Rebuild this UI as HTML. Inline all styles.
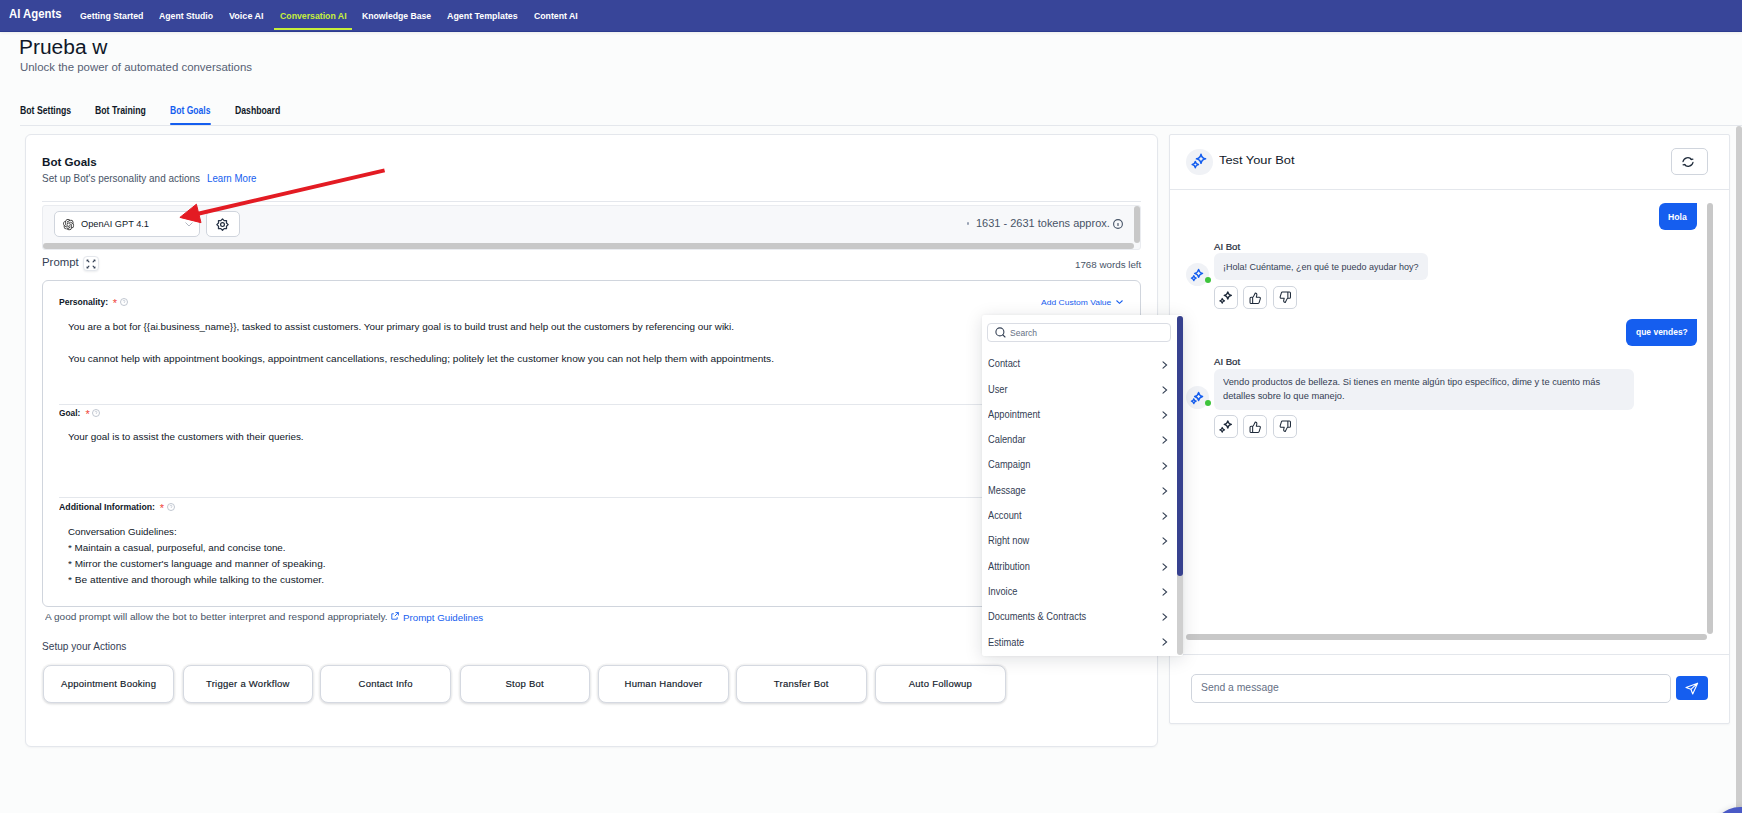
<!DOCTYPE html>
<html><head><meta charset="utf-8">
<style>
html,body{margin:0;padding:0;}
body{width:1742px;height:813px;overflow:hidden;position:relative;background:#fbfcfc;font-family:"Liberation Sans",sans-serif;color:#101828;}
.t{position:absolute;white-space:nowrap;line-height:1;transform-origin:0 50%;}
.b{font-weight:700;}
.abs{position:absolute;box-sizing:border-box;}
svg{position:absolute;overflow:visible;}
.btn{background:#fff;border:1px solid #d5d9e1;border-radius:8px;box-shadow:0 0 0 1.5px rgba(16,24,40,.035),0 1px 3px rgba(16,24,40,.12);display:flex;align-items:center;justify-content:center;font-size:9.5px;letter-spacing:0.25px;padding-bottom:0.8px;color:#101828;-webkit-text-stroke:0.15px #101828;}
</style></head><body>

<!-- NAV -->
<div class="abs" style="left:0;top:0;width:1742px;height:32px;background:#384599;border-bottom:1px solid #2c3b8e;box-shadow:0 1px 3px rgba(0,0,0,.07);"></div>
<div class="t b" style="left:9px;top:7.6px;font-size:12.3px;color:#fff;transform:scaleX(0.9221);">AI Agents</div>
<div class="t b" style="left:80px;top:10.9px;font-size:9.6px;color:#fff;transform:scaleX(0.9163);">Getting Started</div>
<div class="t b" style="left:159.1px;top:10.9px;font-size:9.6px;color:#fff;transform:scaleX(0.9047);">Agent Studio</div>
<div class="t b" style="left:229.3px;top:10.9px;font-size:9.6px;color:#fff;transform:scaleX(0.9403);">Voice AI</div>
<div class="t b" style="left:279.7px;top:10.9px;font-size:9.6px;color:#c6ef3b;transform:scaleX(0.9096);">Conversation AI</div>
<div class="abs" style="left:274px;top:28px;width:78px;height:2px;background:#c6ef3b;"></div>
<div class="t b" style="left:362.2px;top:10.9px;font-size:9.6px;color:#fff;transform:scaleX(0.9000);">Knowledge Base</div>
<div class="t b" style="left:447.3px;top:10.9px;font-size:9.6px;color:#fff;transform:scaleX(0.9231);">Agent Templates</div>
<div class="t b" style="left:534.3px;top:10.9px;font-size:9.6px;color:#fff;transform:scaleX(0.9078);">Content AI</div>

<!-- HEADER -->
<div class="t" style="left:19px;top:37.1px;font-size:20px;color:#101828;transform:scaleX(1.0473);">Prueba w</div>
<div class="t" style="left:20px;top:62.8px;font-size:10.4px;color:#566074;transform:scaleX(1.1004);">Unlock the power of automated conversations</div>

<!-- TABS -->
<div class="t b" style="left:19.8px;top:105px;font-size:10.6px;color:#101828;transform:scaleX(0.8206);">Bot Settings</div>
<div class="t b" style="left:95.2px;top:105px;font-size:10.6px;color:#101828;transform:scaleX(0.8220);">Bot Training</div>
<div class="t b" style="left:170px;top:105px;font-size:10.6px;color:#155eef;transform:scaleX(0.8095);">Bot Goals</div>
<div class="t b" style="left:234.7px;top:105px;font-size:10.6px;color:#101828;transform:scaleX(0.8185);">Dashboard</div>
<div class="abs" style="left:20px;top:125px;width:1722px;height:1px;background:#e4e7ec;"></div>
<div class="abs" style="left:170px;top:123.4px;width:41px;height:1.8px;background:#155eef;border-radius:1px;"></div>

<!-- MAIN CARD -->
<div class="abs" style="left:25px;top:134px;width:1133px;height:613px;background:#fff;border:1px solid #e4e7ec;border-radius:6px;box-shadow:0 1px 2px rgba(16,24,40,.04);"></div>


<!-- CARD CONTENT -->
<div class="t b" style="left:42.4px;top:155.9px;font-size:11.7px;color:#101828;transform:scaleX(0.9927);">Bot Goals</div>
<div class="t" style="left:42.4px;top:173.6px;font-size:10.2px;color:#475467;transform:scaleX(0.9774);">Set up Bot's personality and actions</div>
<div class="t" style="left:206.6px;top:173.6px;font-size:10.2px;color:#155eef;transform:scaleX(0.9499);">Learn More</div>
<div class="abs" style="left:42px;top:201px;width:1099px;height:1px;background:#e4e7ec;"></div>

<!-- model row -->
<div class="abs" style="left:42px;top:205px;width:1099px;height:45px;background:#f7f8fa;border:1px solid #eaecf0;border-radius:3px;"></div>
<div class="abs" style="left:43px;top:243px;width:1091px;height:6px;background:#c8c8c8;border-radius:3px;"></div>
<div class="abs" style="left:1134px;top:206px;width:6px;height:37px;background:#c8c8c8;border-radius:3px;"></div>
<div class="abs" style="left:54px;top:211px;width:146px;height:26px;background:#fff;border:1px solid #d0d5dd;border-radius:5px;"></div>
<svg style="left:63px;top:218.8px" width="11.2" height="11.2" viewBox="0 0 24 24"><path d="M22.2819 9.8211a5.9847 5.9847 0 0 0-.5157-4.9108 6.0462 6.0462 0 0 0-6.5098-2.9A6.0651 6.0651 0 0 0 4.9807 4.1818a5.9847 5.9847 0 0 0-3.9977 2.9 6.0462 6.0462 0 0 0 .7427 7.0966 5.98 5.98 0 0 0 .511 4.9107 6.051 6.051 0 0 0 6.5146 2.9001A5.9847 5.9847 0 0 0 13.2599 24a6.0557 6.0557 0 0 0 5.7718-4.2058 5.9894 5.9894 0 0 0 3.9977-2.9001 6.0557 6.0557 0 0 0-.7475-7.0729zm-9.022 12.6081a4.4755 4.4755 0 0 1-2.8764-1.0408l.1419-.0804 4.7783-2.7582a.7948.7948 0 0 0 .3927-.6813v-6.7369l2.02 1.1686a.071.071 0 0 1 .038.052v5.5826a4.504 4.504 0 0 1-4.4945 4.4944zm-9.6607-4.1254a4.4708 4.4708 0 0 1-.5346-3.0137l.142.0852 4.783 2.7582a.7712.7712 0 0 0 .7806 0l5.8428-3.3685v2.3324a.0804.0804 0 0 1-.0332.0615L9.74 19.9502a4.4992 4.4992 0 0 1-6.1408-1.6464zM2.3408 7.8956a4.485 4.485 0 0 1 2.3655-1.9728V11.6a.7664.7664 0 0 0 .3879.6765l5.8144 3.3543-2.0201 1.1685a.0757.0757 0 0 1-.071 0l-4.8303-2.7865A4.504 4.504 0 0 1 2.3408 7.872zm16.5963 3.8558L13.1038 8.364 15.1192 7.2a.0757.0757 0 0 1 .071 0l4.8303 2.7913a4.4944 4.4944 0 0 1-.6765 8.1042v-5.6772a.79.79 0 0 0-.407-.667zm2.0107-3.0231l-.142-.0852-4.7735-2.7818a.7759.7759 0 0 0-.7854 0L9.409 9.2297V6.8974a.0662.0662 0 0 1 .0284-.0615l4.8303-2.7866a4.4992 4.4992 0 0 1 6.6802 4.66zM8.3065 12.863l-2.02-1.1638a.0804.0804 0 0 1-.038-.0567V6.0742a4.4992 4.4992 0 0 1 7.3757-3.4537l-.142.0805L8.704 5.459a.7948.7948 0 0 0-.3927.6813zm1.0976-2.3654l2.602-1.4998 2.6069 1.4998v2.9994l-2.5974 1.4997-2.6067-1.4997Z" fill="#303030"/></svg>
<div class="t" style="left:80.5px;top:218.8px;font-size:9.9px;color:#101828;transform:scaleX(0.9337);">OpenAI GPT 4.1</div>
<svg style="left:185px;top:221.5px" width="8" height="5" viewBox="0 0 8 5"><path d="M0.5 0.5 L4 4 L7.5 0.5" fill="none" stroke="#b3b8c2" stroke-width="1"/></svg>
<div class="abs" style="left:206px;top:211px;width:34px;height:26px;background:#fff;border:1px solid #d0d5dd;border-radius:5px;"></div>
<svg style="left:0;top:0" width="1742" height="813"><path d="M222.50 218.90 L224.15 220.63 L226.53 220.57 L226.47 222.95 L228.20 224.60 L226.47 226.25 L226.53 228.63 L224.15 228.57 L222.50 230.30 L220.85 228.57 L218.47 228.63 L218.53 226.25 L216.80 224.60 L218.53 222.95 L218.47 220.57 L220.85 220.63Z" fill="none" stroke="#283447" stroke-width="1.25" stroke-linejoin="round"/><circle cx="222.5" cy="224.6" r="1.9" fill="none" stroke="#1d2939" stroke-width="1.2"/></svg>
<div class="abs" style="left:966.8px;top:222.4px;width:2.4px;height:2.4px;background:#98a2b3;border-radius:50%;"></div>
<div class="t" style="left:975.9px;top:217.8px;font-size:10.7px;color:#475467;transform:scaleX(1.0282);">1631 - 2631 tokens approx.</div>
<svg style="left:1113.3px;top:219.3px" width="10" height="10" viewBox="0 0 10 10"><circle cx="5" cy="5" r="4.4" fill="none" stroke="#475467" stroke-width="1.1"/><path d="M5 4.6V6.4" stroke="#475467" stroke-width="1.2" stroke-linecap="round"/></svg>

<!-- prompt header -->
<div class="t" style="left:42.3px;top:256.9px;font-size:10.8px;color:#344054;transform:scaleX(1.0542);">Prompt</div>
<div class="abs" style="left:83.2px;top:256px;width:15.6px;height:15.4px;background:#fff;border:1px solid #e4e7ec;border-radius:4px;box-shadow:0 1px 2px rgba(16,24,40,.08);"></div>
<svg style="left:86.1px;top:258.9px" width="10" height="10" viewBox="0 0 10 10"><g stroke="#344054" stroke-width="1.2" stroke-linecap="round"><path d="M1.2 1.2L2.9 2.9"/><path d="M8.8 1.2L7.1 2.9"/><path d="M1.2 8.8L2.9 7.1"/><path d="M8.8 8.8L7.1 7.1"/></g><g fill="#344054"><path d="M0.7 0.7h2.1L0.7 2.8z"/><path d="M9.3 0.7H7.2L9.3 2.8z"/><path d="M0.7 9.3h2.1L0.7 7.2z"/><path d="M9.3 9.3H7.2L9.3 7.2z"/></g></svg>
<div class="t" style="left:1074.8px;top:259.9px;font-size:9.6px;color:#475467;transform:scaleX(1.0190);">1768 words left</div>

<!-- prompt box -->
<div class="abs" style="left:42px;top:279.5px;width:1099px;height:327px;background:#fff;border:1px solid #d0d5dd;border-radius:6px;"></div>
<div class="t b" style="left:59.1px;top:297px;font-size:9.4px;color:#101828;transform:scaleX(0.9148);">Personality:</div>
<div class="t" style="left:112.8px;top:297.5px;font-size:11px;color:#f04438;">*</div>
<svg style="left:120.1px;top:298px" width="8" height="8" viewBox="0 0 8 8"><circle cx="4" cy="4" r="3.5" fill="none" stroke="#b9c0cb" stroke-width="0.9"/><path d="M3 3.2a1 1 0 1 1 1.3 1V5" fill="none" stroke="#b9c0cb" stroke-width="0.7"/></svg>
<div class="t" style="left:68.4px;top:323px;font-size:9.3px;color:#101828;transform:scaleX(1.0639);">You are a bot for {{ai.business_name}}, tasked to assist customers. Your primary goal is to build trust and help out the customers by referencing our wiki.</div>
<div class="t" style="left:68.4px;top:354.8px;font-size:9.3px;color:#101828;transform:scaleX(1.0847);">You cannot help with appointment bookings, appointment cancellations, rescheduling; politely let the customer know you can not help them with appointments.</div>
<div class="t" style="left:1040.9px;top:298.6px;font-size:8px;color:#155eef;transform:scaleX(1.0634);">Add Custom Value</div>
<svg style="left:1116px;top:300.3px" width="7" height="4" viewBox="0 0 7 4"><path d="M0.5 0.5L3.5 3.3L6.5 0.5" fill="none" stroke="#155eef" stroke-width="1.1"/></svg>

<div class="abs" style="left:59px;top:404px;width:1065px;height:1px;background:#e4e7ec;"></div>
<div class="t b" style="left:59px;top:408.6px;font-size:8.6px;color:#101828;transform:scaleX(0.9650);">Goal:</div>
<div class="t" style="left:85.6px;top:409.2px;font-size:11px;color:#f04438;">*</div>
<svg style="left:92.2px;top:409.2px" width="8" height="8" viewBox="0 0 8 8"><circle cx="4" cy="4" r="3.5" fill="none" stroke="#b9c0cb" stroke-width="0.9"/><path d="M3 3.2a1 1 0 1 1 1.3 1V5" fill="none" stroke="#b9c0cb" stroke-width="0.7"/></svg>
<div class="t" style="left:68.4px;top:432.6px;font-size:9.3px;color:#101828;transform:scaleX(1.0644);">Your goal is to assist the customers with their queries.</div>

<div class="abs" style="left:59px;top:497px;width:1065px;height:1px;background:#e4e7ec;"></div>
<div class="t b" style="left:59px;top:502.6px;font-size:8.6px;color:#101828;transform:scaleX(1.0155);">Additional Information:</div>
<div class="t" style="left:159.8px;top:503.2px;font-size:11px;color:#f04438;">*</div>
<svg style="left:167px;top:503.2px" width="8" height="8" viewBox="0 0 8 8"><circle cx="4" cy="4" r="3.5" fill="none" stroke="#b9c0cb" stroke-width="0.9"/><path d="M3 3.2a1 1 0 1 1 1.3 1V5" fill="none" stroke="#b9c0cb" stroke-width="0.7"/></svg>
<div class="t" style="left:68.4px;top:527.9px;font-size:9.3px;color:#101828;transform:scaleX(1.0455);">Conversation Guidelines:</div>
<div class="t" style="left:68.4px;top:543.9px;font-size:9.3px;color:#101828;transform:scaleX(1.0605);">* Maintain a casual, purposeful, and concise tone.</div>
<div class="t" style="left:68.4px;top:559.9px;font-size:9.3px;color:#101828;transform:scaleX(1.0775);">* Mirror the customer's language and manner of speaking.</div>
<div class="t" style="left:68.4px;top:575.9px;font-size:9.3px;color:#101828;transform:scaleX(1.0910);">* Be attentive and thorough while talking to the customer.</div>

<div class="t" style="left:44.7px;top:612.1px;font-size:9.4px;color:#475467;transform:scaleX(1.0730);">A good prompt will allow the bot to better interpret and respond appropriately.</div>
<svg style="left:391.2px;top:612px" width="8" height="8" viewBox="0 0 8 8"><path d="M4.5 0.6H7.4V3.5M7.4 0.6L3.8 4.2M6.2 5.2V7.2H0.8V1.8H2.8" fill="none" stroke="#155eef" stroke-width="0.9"/></svg>
<div class="t" style="left:403px;top:613px;font-size:9.4px;color:#155eef;transform:scaleX(1.0399);">Prompt Guidelines</div>

<div class="t" style="left:42.4px;top:642.2px;font-size:10.2px;color:#344054;transform:scaleX(0.9935);">Setup your Actions</div>
<div class="abs btn" style="left:43.4px;top:665px;width:130.5px;height:37.5px;">Appointment Booking</div>
<div class="abs btn" style="left:182.6px;top:665px;width:130.5px;height:37.5px;">Trigger a Workflow</div>
<div class="abs btn" style="left:320.4px;top:665px;width:130.5px;height:37.5px;">Contact Info</div>
<div class="abs btn" style="left:459.5px;top:665px;width:130.5px;height:37.5px;">Stop Bot</div>
<div class="abs btn" style="left:598.3px;top:665px;width:130.5px;height:37.5px;">Human Handover</div>
<div class="abs btn" style="left:736px;top:665px;width:130.5px;height:37.5px;">Transfer Bot</div>
<div class="abs btn" style="left:875.2px;top:665px;width:130.5px;height:37.5px;">Auto Followup</div>


<!-- RED ARROW -->
<svg style="left:0;top:0" width="1742" height="813" viewBox="0 0 1742 813"><path d="M384.6 170.3 L197 214" stroke="#e31b23" stroke-width="3.9" stroke-linecap="butt"/><path d="M179.9 217.4 L196.4 204.2 L201 222.7 Z" fill="#e31b23" stroke="#e31b23" stroke-width="1" stroke-linejoin="round"/></svg>

<!-- CHAT PANEL -->
<div class="abs" style="left:1169px;top:134px;width:561px;height:590px;background:#fff;border:1px solid #e4e7ec;border-radius:2px;box-shadow:0 1px 2px rgba(16,24,40,.04);"></div>

<!-- CHAT CONTENT -->
<div class="abs" style="left:1169px;top:189px;width:561px;height:1px;background:#e4e7ec;"></div>
<div class="abs" style="left:1186px;top:148.5px;width:26.5px;height:26.5px;background:#f0f2f6;border-radius:50%;"></div>
<svg style="left:0;top:0" width="1742" height="813"><path d="M1201.00 154.30 Q1201.77 158.04 1205.50 158.80 Q1201.77 159.56 1201.00 163.30 Q1200.23 159.56 1196.50 158.80 Q1200.23 158.04 1201.00 154.30Z" fill="none" stroke="#155eef" stroke-width="1.6" stroke-linejoin="round"/><path d="M1195.30 161.50 Q1195.83 164.07 1198.40 164.60 Q1195.83 165.13 1195.30 167.70 Q1194.77 165.13 1192.20 164.60 Q1194.77 164.07 1195.30 161.50Z" fill="none" stroke="#155eef" stroke-width="1.5" stroke-linejoin="round"/></svg>
<div class="t" style="left:1219px;top:154.9px;font-size:11.8px;color:#101828;transform:scaleX(1.0858);">Test Your Bot</div>
<div class="abs" style="left:1671px;top:148px;width:37px;height:27px;background:#fff;border:1px solid #d0d5dd;border-radius:5px;"></div>
<svg style="left:1681.6px;top:155.5px" width="12" height="12" viewBox="0 0 12 12"><g fill="none" stroke="#1d2939" stroke-width="1.2" stroke-linecap="round" stroke-linejoin="round"><path d="M1 5.6A4.9 4.9 0 0 1 9.7 3.6"/><path d="M8.9 3.5L10.9 3.1"/><path d="M11 6.4A4.9 4.9 0 0 1 2.3 8.4"/><path d="M3.1 8.5L1.1 8.9"/></g></svg>

<!-- chat scrollbars -->
<div class="abs" style="left:1707px;top:203px;width:6px;height:430.5px;background:#c8c8c8;border-radius:3px;"></div>
<div class="abs" style="left:1186px;top:634px;width:521px;height:6px;background:#c8c8c8;border-radius:3px;"></div>

<!-- messages -->
<div class="abs" style="left:1659px;top:203px;width:38px;height:27px;background:#155eef;border-radius:6px 0 6px 6px;"></div>
<div class="t b" style="left:1668.3px;top:212.1px;font-size:9.5px;color:#fff;transform:scaleX(0.9129);">Hola</div>
<div class="t" style="left:1214.3px;top:242.62px;font-size:8.6px;color:#1d2939;-webkit-text-stroke:0.2px #1d2939;transform:scaleX(1.1151);">AI Bot</div>
<div class="abs" style="left:1214.3px;top:253.2px;width:213.5px;height:26.4px;background:#f0f2f6;border-radius:6px;"></div>
<div class="t" style="left:1223.3px;top:262.47px;font-size:9.6px;color:#344054;transform:scaleX(0.9374);">¡Hola! Cuéntame, ¿en qué te puedo ayudar hoy?</div>
<div class="abs" style="left:1186px;top:262.9px;width:23px;height:23px;background:#f0f2f6;border-radius:50%;"></div>
<svg style="left:0;top:0" width="1742" height="813"><path d="M1198.60 269.40 Q1199.28 272.72 1202.60 273.40 Q1199.28 274.08 1198.60 277.40 Q1197.92 274.08 1194.60 273.40 Q1197.92 272.72 1198.60 269.40Z" fill="none" stroke="#155eef" stroke-width="1.35" stroke-linejoin="round"/><path d="M1193.80 275.70 Q1194.21 277.69 1196.20 278.10 Q1194.21 278.51 1193.80 280.50 Q1193.39 278.51 1191.40 278.10 Q1193.39 277.69 1193.80 275.70Z" fill="none" stroke="#155eef" stroke-width="1.35" stroke-linejoin="round"/></svg>
<div class="abs" style="left:1205px;top:276.8px;width:6px;height:6px;background:#3ec43c;border-radius:50%;"></div>
<div class="abs" style="left:1214.3px;top:286.4px;width:23.3px;height:23px;background:#fff;border:1px solid #d0d5dd;border-radius:5px;"></div>
<div class="abs" style="left:1243.4px;top:286.4px;width:23.3px;height:23px;background:#fff;border:1px solid #d0d5dd;border-radius:5px;"></div>
<div class="abs" style="left:1273.3px;top:286.4px;width:23.3px;height:23px;background:#fff;border:1px solid #d0d5dd;border-radius:5px;"></div>
<svg style="left:0;top:0" width="1742" height="813"><path d="M1227.80 291.80 Q1228.41 294.79 1231.40 295.40 Q1228.41 296.01 1227.80 299.00 Q1227.19 296.01 1224.20 295.40 Q1227.19 294.79 1227.80 291.80Z" fill="none" stroke="#1d2939" stroke-width="1.3" stroke-linejoin="round"/><path d="M1222.20 298.50 Q1222.59 300.41 1224.50 300.80 Q1222.59 301.19 1222.20 303.10 Q1221.81 301.19 1219.90 300.80 Q1221.81 300.41 1222.20 298.50Z" fill="none" stroke="#1d2939" stroke-width="1.25" stroke-linejoin="round"/></svg>
<svg style="left:1249.3px;top:291.6px" width="12.5" height="12.5" viewBox="0 0 24 24"><path d="M7 10v12M15 5.88 14 10h5.83a2 2 0 0 1 1.92 2.56l-2.33 8A2 2 0 0 1 17.5 22H4a2 2 0 0 1-2-2v-8a2 2 0 0 1 2-2h2.76a2 2 0 0 0 1.790-1.11L12 2a3.13 3.13 0 0 1 3 3.88Z" fill="none" stroke="#1d2939" stroke-width="2" stroke-linejoin="round" stroke-linecap="round"/></svg>
<svg style="left:1278.8px;top:291.4px" width="12.5" height="12.5" viewBox="0 0 24 24"><path d="M17 14V2M9 18.12 10 14H4.17a2 2 0 0 1-1.92-2.56l2.33-8A2 2 0 0 1 6.5 2H20a2 2 0 0 1 2 2v8a2 2 0 0 1-2 2h-2.76a2 2 0 0 0-1.79 1.11L12 22a3.13 3.13 0 0 1-3-3.88Z" fill="none" stroke="#1d2939" stroke-width="2" stroke-linejoin="round" stroke-linecap="round"/></svg>
<div class="abs" style="left:1626px;top:319px;width:71px;height:26.7px;background:#155eef;border-radius:6px 0 6px 6px;"></div>
<div class="t b" style="left:1636.2px;top:327.2px;font-size:9.5px;color:#fff;transform:scaleX(0.8919);">que vendes?</div>
<div class="t" style="left:1214.3px;top:357.62px;font-size:8.6px;color:#1d2939;-webkit-text-stroke:0.2px #1d2939;transform:scaleX(1.1151);">AI Bot</div>
<div class="abs" style="left:1214.3px;top:369.1px;width:419.5px;height:40.6px;background:#f0f2f6;border-radius:6px;"></div>
<div class="t" style="left:1223.3px;top:376.97px;font-size:9.6px;color:#344054;transform:scaleX(0.9673);">Vendo productos de belleza. Si tienes en mente algún tipo específico, dime y te cuento más</div>
<div class="t" style="left:1223.3px;top:390.87px;font-size:9.6px;color:#344054;transform:scaleX(0.9693);">detalles sobre lo que manejo.</div>
<div class="abs" style="left:1186px;top:386.0px;width:23px;height:23px;background:#f0f2f6;border-radius:50%;"></div>
<svg style="left:0;top:0" width="1742" height="813"><path d="M1198.60 392.50 Q1199.28 395.82 1202.60 396.50 Q1199.28 397.18 1198.60 400.50 Q1197.92 397.18 1194.60 396.50 Q1197.92 395.82 1198.60 392.50Z" fill="none" stroke="#155eef" stroke-width="1.35" stroke-linejoin="round"/><path d="M1193.80 398.80 Q1194.21 400.79 1196.20 401.20 Q1194.21 401.61 1193.80 403.60 Q1193.39 401.61 1191.40 401.20 Q1193.39 400.79 1193.80 398.80Z" fill="none" stroke="#155eef" stroke-width="1.35" stroke-linejoin="round"/></svg>
<div class="abs" style="left:1205px;top:399.9px;width:6px;height:6px;background:#3ec43c;border-radius:50%;"></div>
<div class="abs" style="left:1214.3px;top:415.4px;width:23.3px;height:23px;background:#fff;border:1px solid #d0d5dd;border-radius:5px;"></div>
<div class="abs" style="left:1243.4px;top:415.4px;width:23.3px;height:23px;background:#fff;border:1px solid #d0d5dd;border-radius:5px;"></div>
<div class="abs" style="left:1273.3px;top:415.4px;width:23.3px;height:23px;background:#fff;border:1px solid #d0d5dd;border-radius:5px;"></div>
<svg style="left:0;top:0" width="1742" height="813"><path d="M1227.80 420.80 Q1228.41 423.79 1231.40 424.40 Q1228.41 425.01 1227.80 428.00 Q1227.19 425.01 1224.20 424.40 Q1227.19 423.79 1227.80 420.80Z" fill="none" stroke="#1d2939" stroke-width="1.3" stroke-linejoin="round"/><path d="M1222.20 427.50 Q1222.59 429.41 1224.50 429.80 Q1222.59 430.19 1222.20 432.10 Q1221.81 430.19 1219.90 429.80 Q1221.81 429.41 1222.20 427.50Z" fill="none" stroke="#1d2939" stroke-width="1.25" stroke-linejoin="round"/></svg>
<svg style="left:1249.3px;top:420.6px" width="12.5" height="12.5" viewBox="0 0 24 24"><path d="M7 10v12M15 5.88 14 10h5.83a2 2 0 0 1 1.92 2.56l-2.33 8A2 2 0 0 1 17.5 22H4a2 2 0 0 1-2-2v-8a2 2 0 0 1 2-2h2.76a2 2 0 0 0 1.790-1.11L12 2a3.13 3.13 0 0 1 3 3.88Z" fill="none" stroke="#1d2939" stroke-width="2" stroke-linejoin="round" stroke-linecap="round"/></svg>
<svg style="left:1278.8px;top:420.4px" width="12.5" height="12.5" viewBox="0 0 24 24"><path d="M17 14V2M9 18.12 10 14H4.17a2 2 0 0 1-1.92-2.56l2.33-8A2 2 0 0 1 6.5 2H20a2 2 0 0 1 2 2v8a2 2 0 0 1-2 2h-2.76a2 2 0 0 0-1.79 1.11L12 22a3.13 3.13 0 0 1-3-3.88Z" fill="none" stroke="#1d2939" stroke-width="2" stroke-linejoin="round" stroke-linecap="round"/></svg>

<div class="abs" style="left:1169px;top:654px;width:561px;height:1px;background:#e4e7ec;"></div>
<div class="abs" style="left:1191px;top:674px;width:479.5px;height:28.6px;background:#fff;border:1px solid #d0d5dd;border-radius:5px;"></div>
<div class="t" style="left:1200.8px;top:681.6px;font-size:10.8px;color:#667085;transform:scaleX(0.9601);">Send a message</div>
<div class="abs" style="left:1676px;top:676px;width:32px;height:23.8px;background:#155eef;border-radius:4px;"></div>
<svg style="left:0;top:0" width="1742" height="813"><path d="M1697.6 683.2 L1686 687.6 L1690.9 689.3 L1692.7 694 Z M1697.6 683.2 L1690.9 689.3" fill="none" stroke="#fff" stroke-width="1.1" stroke-linejoin="round"/></svg>

<!-- POPUP -->
<div class="abs" style="left:981.5px;top:314.6px;width:201.5px;height:341.2px;background:#fff;border-radius:2px;box-shadow:0 3px 18px rgba(16,24,40,.13),0 0 3px rgba(16,24,40,.06);"></div>
<div class="abs" style="left:987.4px;top:323.3px;width:183.2px;height:18.4px;background:#fff;border:1px solid #dadde4;border-radius:4px;"></div>
<svg style="left:995px;top:327.3px" width="11" height="11" viewBox="0 0 11 11"><circle cx="4.9" cy="4.9" r="4" fill="none" stroke="#344054" stroke-width="1.1"/><path d="M7.8 7.8L10 10" stroke="#344054" stroke-width="1.1" stroke-linecap="round"/></svg>
<div class="t" style="left:1009.9px;top:329.2px;font-size:9px;color:#667085;transform:scaleX(0.9463);">Search</div>
<div class="abs" style="left:1177.3px;top:315.5px;width:5.5px;height:339px;background:#cfcfcf;border-radius:3px;"></div>
<div class="abs" style="left:1177.3px;top:315.5px;width:5.5px;height:260.3px;background:#37418f;border-radius:3px;"></div>
<div class="t" style="left:987.8px;top:359px;font-size:10.2px;color:#344054;transform:scaleX(0.912);">Contact</div>
<svg style="left:1162px;top:360.60px" width="6" height="8" viewBox="0 0 6 8"><path d="M1 0.8L4.6 4L1 7.2" fill="none" stroke="#344054" stroke-width="1.1" stroke-linecap="round"/></svg>
<div class="t" style="left:987.8px;top:385px;font-size:10.2px;color:#344054;transform:scaleX(0.912);">User</div>
<svg style="left:1162px;top:385.86px" width="6" height="8" viewBox="0 0 6 8"><path d="M1 0.8L4.6 4L1 7.2" fill="none" stroke="#344054" stroke-width="1.1" stroke-linecap="round"/></svg>
<div class="t" style="left:987.8px;top:410px;font-size:10.2px;color:#344054;transform:scaleX(0.912);">Appointment</div>
<svg style="left:1162px;top:411.12px" width="6" height="8" viewBox="0 0 6 8"><path d="M1 0.8L4.6 4L1 7.2" fill="none" stroke="#344054" stroke-width="1.1" stroke-linecap="round"/></svg>
<div class="t" style="left:987.8px;top:435px;font-size:10.2px;color:#344054;transform:scaleX(0.912);">Calendar</div>
<svg style="left:1162px;top:436.38px" width="6" height="8" viewBox="0 0 6 8"><path d="M1 0.8L4.6 4L1 7.2" fill="none" stroke="#344054" stroke-width="1.1" stroke-linecap="round"/></svg>
<div class="t" style="left:987.8px;top:460px;font-size:10.2px;color:#344054;transform:scaleX(0.912);">Campaign</div>
<svg style="left:1162px;top:461.64px" width="6" height="8" viewBox="0 0 6 8"><path d="M1 0.8L4.6 4L1 7.2" fill="none" stroke="#344054" stroke-width="1.1" stroke-linecap="round"/></svg>
<div class="t" style="left:987.8px;top:486px;font-size:10.2px;color:#344054;transform:scaleX(0.912);">Message</div>
<svg style="left:1162px;top:486.90px" width="6" height="8" viewBox="0 0 6 8"><path d="M1 0.8L4.6 4L1 7.2" fill="none" stroke="#344054" stroke-width="1.1" stroke-linecap="round"/></svg>
<div class="t" style="left:987.8px;top:511px;font-size:10.2px;color:#344054;transform:scaleX(0.912);">Account</div>
<svg style="left:1162px;top:512.16px" width="6" height="8" viewBox="0 0 6 8"><path d="M1 0.8L4.6 4L1 7.2" fill="none" stroke="#344054" stroke-width="1.1" stroke-linecap="round"/></svg>
<div class="t" style="left:987.8px;top:536px;font-size:10.2px;color:#344054;transform:scaleX(0.912);">Right now</div>
<svg style="left:1162px;top:537.42px" width="6" height="8" viewBox="0 0 6 8"><path d="M1 0.8L4.6 4L1 7.2" fill="none" stroke="#344054" stroke-width="1.1" stroke-linecap="round"/></svg>
<div class="t" style="left:987.8px;top:562px;font-size:10.2px;color:#344054;transform:scaleX(0.912);">Attribution</div>
<svg style="left:1162px;top:562.68px" width="6" height="8" viewBox="0 0 6 8"><path d="M1 0.8L4.6 4L1 7.2" fill="none" stroke="#344054" stroke-width="1.1" stroke-linecap="round"/></svg>
<div class="t" style="left:987.8px;top:587px;font-size:10.2px;color:#344054;transform:scaleX(0.912);">Invoice</div>
<svg style="left:1162px;top:587.94px" width="6" height="8" viewBox="0 0 6 8"><path d="M1 0.8L4.6 4L1 7.2" fill="none" stroke="#344054" stroke-width="1.1" stroke-linecap="round"/></svg>
<div class="t" style="left:987.8px;top:612px;font-size:10.2px;color:#344054;transform:scaleX(0.912);">Documents &amp; Contracts</div>
<svg style="left:1162px;top:613.20px" width="6" height="8" viewBox="0 0 6 8"><path d="M1 0.8L4.6 4L1 7.2" fill="none" stroke="#344054" stroke-width="1.1" stroke-linecap="round"/></svg>
<div class="t" style="left:987.8px;top:638px;font-size:10.2px;color:#344054;transform:scaleX(0.912);">Estimate</div>
<svg style="left:1162px;top:638.46px" width="6" height="8" viewBox="0 0 6 8"><path d="M1 0.8L4.6 4L1 7.2" fill="none" stroke="#344054" stroke-width="1.1" stroke-linecap="round"/></svg>
<!-- PAGE SCROLLBAR -->
<div class="abs" style="left:1736px;top:126px;width:6px;height:700px;background:#cdcdcd;border-radius:3px 3px 0 0;"></div>
<div class="abs" style="left:1711px;top:806.5px;width:58px;height:58px;background:#4a5ac6;border-radius:50%;box-shadow:0 0 6px rgba(0,0,0,.12);"></div>

</body></html>
